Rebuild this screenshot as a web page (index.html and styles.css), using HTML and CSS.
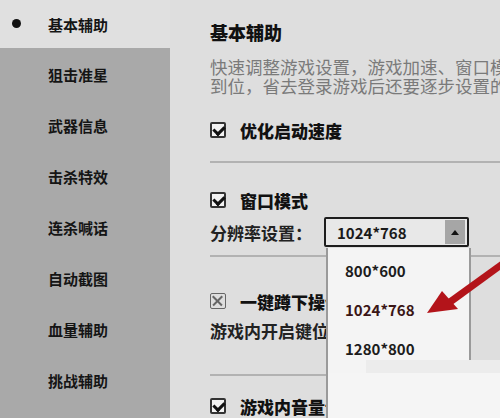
FILE: index.html
```html
<!DOCTYPE html>
<html lang="zh">
<head>
<meta charset="utf-8">
<link rel="stylesheet" href="styles.css">
</head>
<body>
<div class="app">
  <nav class="sidebar">
    <div class="nav-item active"><span class="dot"></span>基本辅助</div>
    <div class="nav-rest">
      <div class="nav-item">狙击准星</div>
      <div class="nav-item">武器信息</div>
      <div class="nav-item">击杀特效</div>
      <div class="nav-item">连杀喊话</div>
      <div class="nav-item">自动截图</div>
      <div class="nav-item">血量辅助</div>
      <div class="nav-item">挑战辅助</div>
    </div>
  </nav>
  <main class="main">
    <h1 class="title">基本辅助</h1>
    <p class="desc">快速调整游戏设置，游戏加速、窗口模式<br>到位，省去登录游戏后还要逐步设置的</p>
    <div class="check-row r1"><span class="cb checked"></span><span class="label">优化启动速度</span></div>
    <div class="divider d1"></div>
    <div class="check-row r2"><span class="cb checked"></span><span class="label">窗口模式</span></div>
    <div class="res-row">
      <span class="res-label">分辨率设置：</span>
      <div class="select-wrap">
        <div class="select"><span class="sel-val">1024*768</span><span class="sel-btn"><span class="tri"></span></span></div>
        <div class="dropdown">
          <div class="opt">800*600</div>
          <div class="opt cur">1024*768</div>
          <div class="opt">1280*800</div>
        </div>
      </div>
    </div>
    <div class="divider d2"></div>
    <div class="check-row r3"><span class="cb crossed"></span><span class="label">一键蹲下操作</span></div>
    <p class="sub">游戏内开启键位提示</p>
    <div class="divider d3"></div>
    <div class="check-row r4"><span class="cb checked"></span><span class="label">游戏内音量调节</span></div>
  </main>
  <div class="blur"></div>
  <div class="patch"></div>
  <svg class="arrow" width="80" height="70" viewBox="0 0 80 70">
    <path d="M82 4 L28 43 L32 49 L84 11 Z" fill="#b3141a"/>
    <path d="M7 57 L22 35 L38 53 Z" fill="#b3141a"/>
  </svg>
</div>
</body>
</html>
```
FILE: styles.css
```css
* { box-sizing: border-box; }
html, body { margin: 0; padding: 0; }
body {
  width: 500px;
  height: 418px;
  overflow: hidden;
  background: #dedede;
  font-family: "Noto Sans CJK SC", "Noto Sans", sans-serif;
  color: #141414;
}
.app {
  position: relative;
  display: flex;
  width: 500px;
  height: 418px;
  overflow: hidden;
}
.sidebar {
  width: 170px;
  flex: none;
  display: flex;
  flex-direction: column;
}
.nav-item {
  height: 51px;
  display: flex;
  align-items: center;
  padding-left: 48px;
  font-size: 15px;
  font-weight: 700;
  color: #151515;
  position: relative;
}
.nav-item.active {
  height: 48px;
  background: #e0e0e0;
}
.dot {
  position: absolute;
  left: 12px;
  top: 19px;
  width: 9px;
  height: 9px;
  border-radius: 50%;
  background: #111;
}
.nav-rest {
  flex: 1;
  background: #a9a9a9;
  padding-top: 1px;
}
.main {
  flex: 1;
  min-width: 0;
  padding-left: 40px;
  position: relative;
  overflow: hidden;
}
.title {
  margin: 20px 0 0 0;
  font-size: 18px;
  line-height: 24px;
  font-weight: 900;
  color: #111;
}
.desc {
  margin: 13px 0 0 0;
  font-size: 17.5px;
  line-height: 19px;
  color: #7a7a7a;
  white-space: nowrap;
}
.check-row {
  display: flex;
  align-items: center;
  height: 24px;
}
.r1 { margin-top: 23px; }
.r2 { margin-top: 25px; }
.r3 { margin-top: 32px; }
.r4 { margin-top: 18px; }
.label {
  margin-left: 14px;
  font-size: 17px;
  font-weight: 900;
  color: #111;
  white-space: nowrap;
}
.cb {
  width: 16px;
  height: 16px;
  flex: none;
  border: 2px solid #333;
  border-radius: 2px;
  position: relative;
  background: #f2f2f2;
}
.cb.checked::after {
  content: "";
  position: absolute;
  left: 3px;
  top: 0px;
  width: 5px;
  height: 8px;
  border-right: 3px solid #111;
  border-bottom: 3px solid #111;
  transform: rotate(45deg);
}
.cb.crossed {
  border: 1.5px solid #666;
  background: transparent;
}
.cb.crossed::before, .cb.crossed::after {
  content: "";
  position: absolute;
  left: 0px;
  top: 6px;
  width: 13px;
  height: 1.5px;
  background: #666;
}
.cb.crossed::before { transform: rotate(45deg); }
.cb.crossed::after { transform: rotate(-45deg); }
.divider {
  height: 2px;
  background: #b2b2b2;
}
.d1 { margin-top: 19px; }
.d2 { margin-top: 8px; }
.d3 { margin-top: 32px; }
.res-row {
  display: flex;
  align-items: center;
  margin-top: 5px;
  height: 30px;
}
.res-label {
  font-size: 17px;
  font-weight: 700;
  color: #222;
  width: 114px;
  flex: none;
  white-space: nowrap;
}
.select-wrap {
  position: relative;
  width: 145px;
  height: 30px;
  flex: none;
}
.select {
  width: 145px;
  height: 30px;
  border: 2px solid #1d1d1d;
  border-radius: 2px;
  background: #e8e8e8;
  display: flex;
  align-items: center;
  justify-content: space-between;
  padding-left: 11px;
  padding-right: 2px;
}
.sel-val {
  font-size: 15px;
  font-weight: 700;
  color: #1a1a1a;
}
.sel-btn {
  width: 20px;
  height: 24px;
  background: #a6a6a6;
  display: flex;
  align-items: center;
  justify-content: center;
}
.tri {
  width: 0;
  height: 0;
  border-left: 4px solid transparent;
  border-right: 4px solid transparent;
  border-bottom: 5px solid #111;
}
.dropdown {
  position: absolute;
  left: 2px;
  top: 31px;
  width: 145px;
  height: 200px;
  background: #f4f4f4;
  border-left: 2px solid #9a9a9a;
  border-right: 2px solid #9a9a9a;
  padding-top: 12px;
  z-index: 2;
}
.opt {
  height: 39px;
  line-height: 22px;
  padding-left: 17px;
  font-size: 15px;
  font-weight: 700;
  color: #1c1c1c;
}
.opt.cur { color: #3a1616; }
.sub {
  margin: 7px 0 0 0;
  font-size: 17px;
  line-height: 22px;
  font-weight: 700;
  color: #222;
  white-space: nowrap;
}
.blur {
  position: absolute;
  left: 366px;
  top: 360px;
  width: 134px;
  height: 14px;
  background: #ececec;
  z-index: 3;
}
.patch {
  position: absolute;
  left: 328px;
  top: 373px;
  width: 172px;
  height: 45px;
  background: #f5f5f5;
  z-index: 3;
}
.arrow {
  position: absolute;
  left: 420px;
  top: 256px;
  z-index: 4;
}
```
